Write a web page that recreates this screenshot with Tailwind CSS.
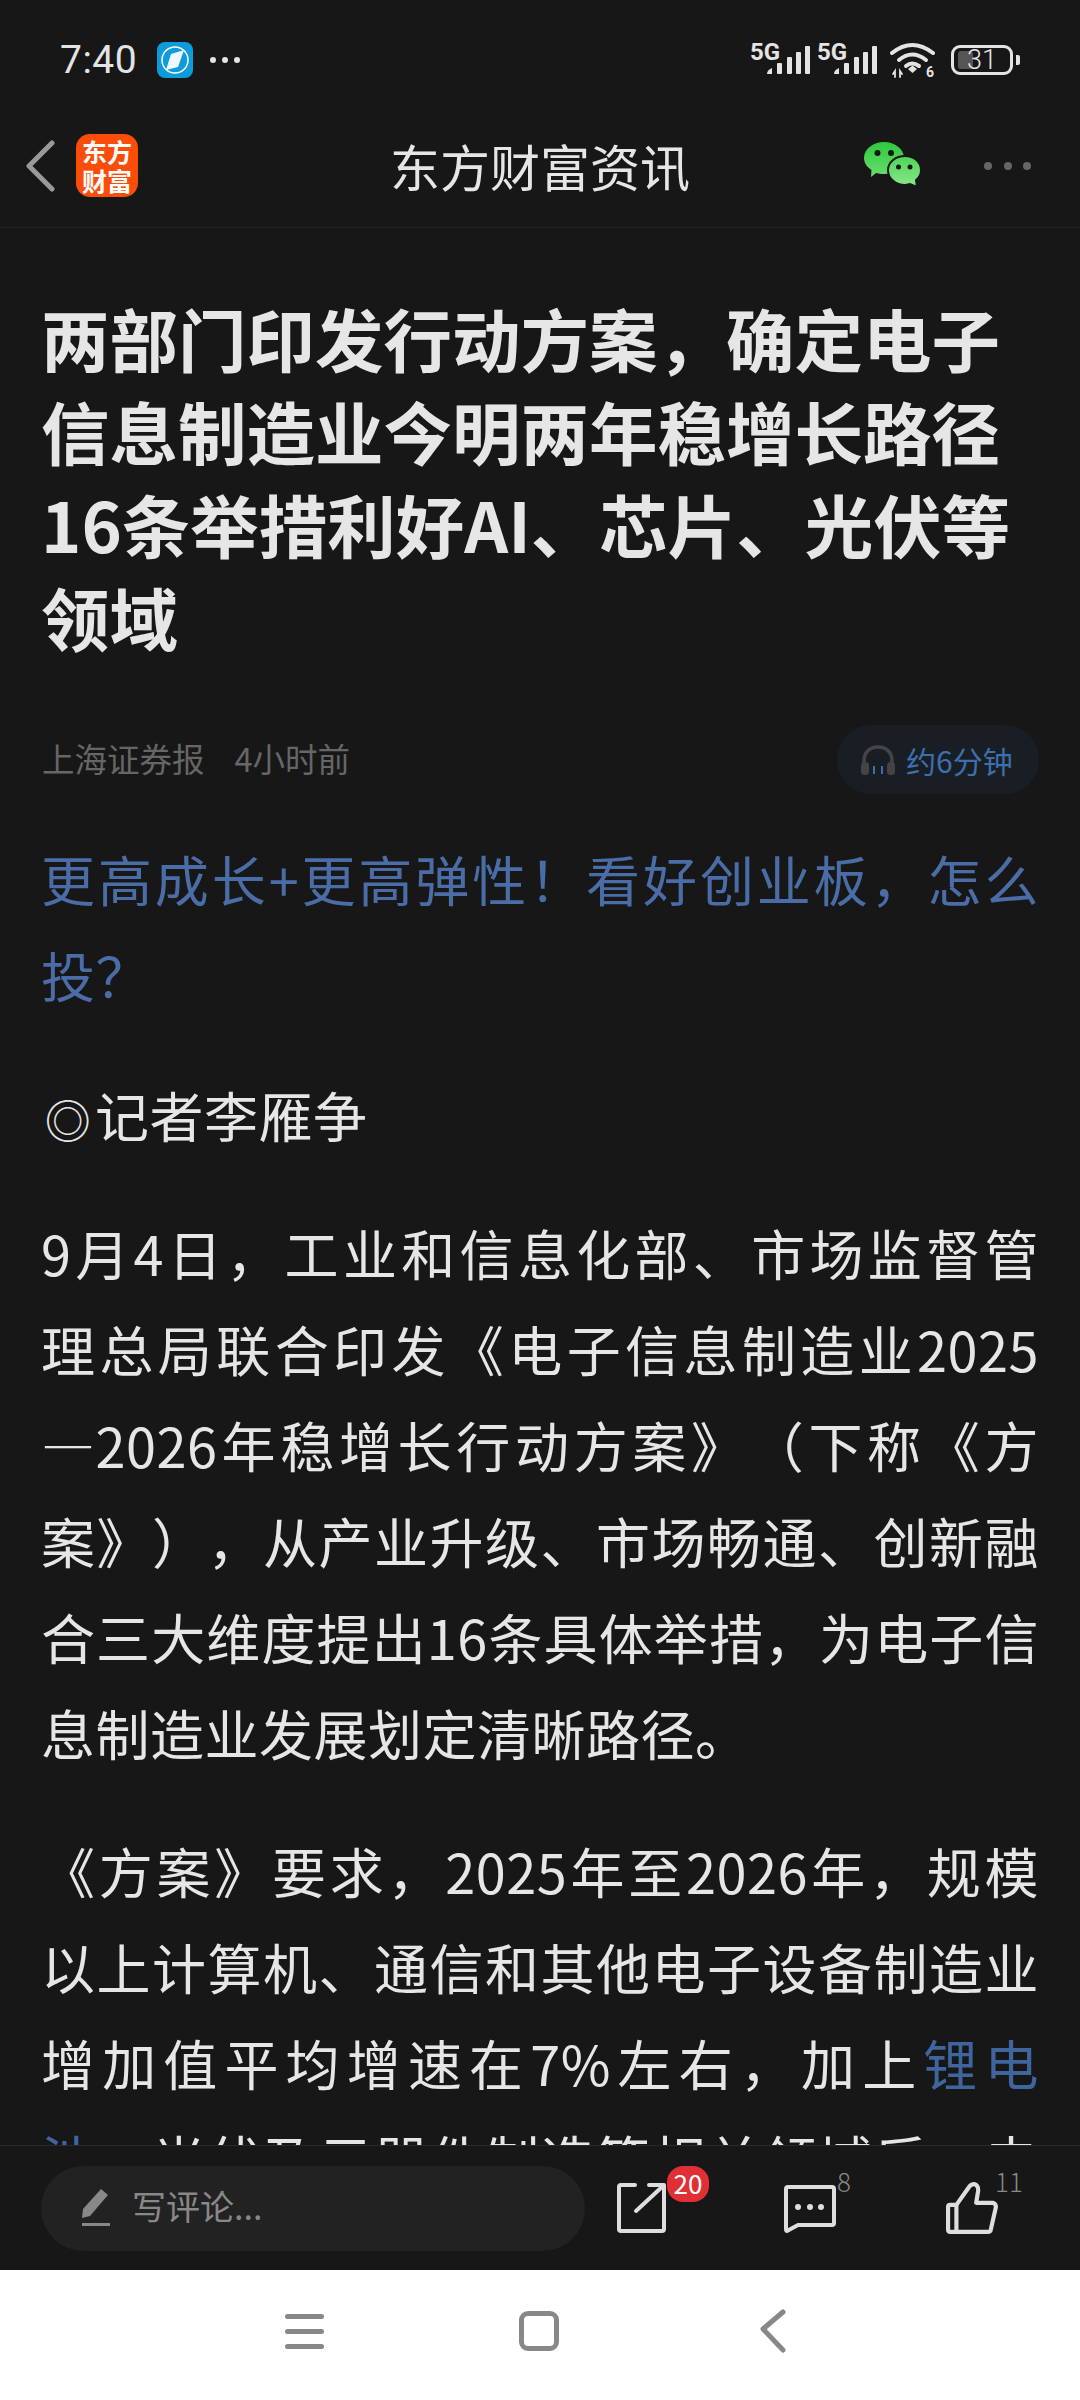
<!DOCTYPE html>
<html lang="zh-CN">
<head>
  <meta charset="UTF-8">
  <meta name="viewport" content="width=device-width, initial-scale=1.0">
  <title>东方财富资讯</title>
  <script src="https://cdn.jsdelivr.net/npm/@tailwindcss/browser@4"></script>
</head>
<body class="bg-[#171717]">
<div class="w-[1080px] h-[2400px] flex flex-col overflow-hidden bg-[#171717] text-[#e6e6e6] font-['Noto_Sans_CJK_SC',sans-serif]">

  <!-- status bar -->
  <div class="h-[80px] shrink-0 relative flex items-center pl-[60px] pr-[60px] pt-[40px]">
    <span class="font-['Roboto',sans-serif] text-[39px] leading-none tracking-[0.5px] text-[#e4e4e4]">7:40</span>
    <svg class="ml-[20px]" width="36" height="36" viewBox="0 0 36 36">
      <rect width="36" height="36" rx="8" fill="#0d9bdc"/>
      <circle cx="18" cy="18" r="13" fill="none" stroke="#fff" stroke-width="1.5"/>
      <path d="M27 8 L21 25 L9 28 L14 12 Z" fill="#eef8fd"/>
    </svg>
    <svg class="ml-[17px]" width="30" height="8" viewBox="0 0 30 8" fill="#e4e4e4">
      <circle cx="3" cy="4" r="3"/><circle cx="15" cy="4" r="3"/><circle cx="27" cy="4" r="3"/>
    </svg>
    <div class="ml-auto flex items-center">
      <div class="relative w-[60px] h-[36px]">
        <span class="absolute left-0 -top-[4px] text-[24px] leading-[28px] font-bold font-['Roboto',sans-serif] text-[#e4e4e4]">5G</span>
        <svg class="absolute left-[16px] top-[4px]" width="44" height="30" viewBox="0 0 44 30" fill="#e4e4e4">
          <path d="M1 28 Q1 24 6 22 V28 Z"/><rect x="11" y="17" width="5" height="11" rx="1"/><rect x="21" y="11" width="5" height="17" rx="1"/><rect x="30" y="6" width="5" height="22" rx="1"/><rect x="39" y="0" width="5" height="28" rx="1"/>
        </svg>
      </div>
      <div class="relative w-[60px] h-[36px] ml-[7px]">
        <span class="absolute left-0 -top-[4px] text-[24px] leading-[28px] font-bold font-['Roboto',sans-serif] text-[#e4e4e4]">5G</span>
        <svg class="absolute left-[16px] top-[4px]" width="44" height="30" viewBox="0 0 44 30" fill="#e4e4e4">
          <path d="M1 28 Q1 24 6 22 V28 Z"/><rect x="11" y="17" width="5" height="11" rx="1"/><rect x="21" y="11" width="5" height="17" rx="1"/><rect x="30" y="6" width="5" height="22" rx="1"/><rect x="39" y="0" width="5" height="28" rx="1"/>
        </svg>
      </div>
      <svg class="ml-[13px]" width="46" height="36" viewBox="0 0 46 36" fill="none" stroke="#e4e4e4" stroke-linecap="round">
        <path d="M2 11 Q22 -5 43 11" stroke-width="4"/>
        <path d="M9 18 Q22 7 36 18" stroke-width="4"/>
        <path d="M16 24 Q22 19 29 24" stroke-width="4"/>
        <path d="M18 27 L22.500 23.500 L27 27 L22.500 31 Z" fill="#e4e4e4" stroke="none"/>
        <path d="M3 32 L5 29 L5 35 M10 35 L10 29 L12 32" stroke-width="1.800"/>
        <text x="36" y="35" font-size="14" font-weight="700" fill="#e4e4e4" stroke="none" font-family="Roboto">6</text>
      </svg>
      <div class="ml-[15px] relative w-[62px] h-[30px] border-[3px] border-[#e4e4e4] rounded-[9px]">
        <div class="absolute left-[4px] top-[3px] w-[15px] h-[18px] bg-[#555] rounded-[3px]"></div>
        <span class="absolute inset-0 flex items-center justify-center text-[27px] leading-none font-['Roboto',sans-serif] font-light text-[#e4e4e4]">31</span>
      </div>
      <div class="ml-[3px] w-[4px] h-[10px] rounded-r-[2px] bg-[#e4e4e4]"></div>
    </div>
  </div>

  <!-- header -->
  <div class="h-[148px] shrink-0 relative flex items-center border-b border-[#262626] pl-[25px] pt-[24px]">
    <svg width="30" height="52" viewBox="0 0 30 52" fill="none">
      <path d="M27 3 L4 26 L27 49" stroke="#999" stroke-width="5" stroke-linecap="round" stroke-linejoin="round"/>
    </svg>
    <div class="ml-[21px] w-[62px] h-[63px] rounded-[14px] bg-[#fb4d0a] flex flex-col items-center justify-center text-white font-bold text-[25px] leading-[29px]">
      <span>东方</span>
      <span>财富</span>
    </div>
    <div class="absolute left-[390px] top-[49px] text-[50px] leading-[72px] text-[#e6e6e6]">东方财富资讯</div>
    <svg class="absolute left-[864px] top-[61px]" width="58" height="48" viewBox="0 0 58 48">
      <defs>
        <linearGradient id="wx1" x1="0" y1="0" x2="0" y2="1"><stop offset="0" stop-color="#2ec83c"/><stop offset="1" stop-color="#6ade70"/></linearGradient>
        <linearGradient id="wx2" x1="0" y1="0" x2="0" y2="1"><stop offset="0" stop-color="#4fd457"/><stop offset="1" stop-color="#8ae88c"/></linearGradient>
      </defs>
      <path d="M20 1 C31 1 40 8 40 17 C40 26 31 33 20 33 C17 33 14 32.500 12 32 L7 36 L7.500 29 C3 26 0 22 0 17 C0 8 9 1 20 1 Z" fill="url(#wx1)"/>
      <circle cx="13.500" cy="12" r="3" fill="#171717"/><circle cx="27" cy="12" r="3" fill="#171717"/>
      <path d="M41 15 C50 15 57 21 57 29 C57 33 55 37 52 39 L53 46 L46 43 C44 43.500 42.500 44 41 44 C32 44 24 38 24 29 C24 21 32 15 41 15 Z" fill="url(#wx2)" stroke="#171717" stroke-width="2"/>
      <circle cx="34.500" cy="26" r="2.500" fill="#171717"/><circle cx="46" cy="26" r="2.500" fill="#171717"/>
    </svg>
    <div class="absolute left-[984px] top-[82px] flex gap-[11.5px]">
      <span class="w-[8px] h-[8px] rounded-full bg-[#666]"></span>
      <span class="w-[8px] h-[8px] rounded-full bg-[#666]"></span>
      <span class="w-[8px] h-[8px] rounded-full bg-[#666]"></span>
    </div>
  </div>

  <!-- article -->
  <div class="flex-1 min-h-0 overflow-hidden px-[41px]">
    <h1 class="pt-[63px] text-[68.5px] leading-[93px] font-bold text-[#e6e6e6] w-[1000px]">两部门印发行动方案，确定电子信息制造业今明两年稳增长路径<br>16条举措利好AI、芯片、光伏等领域</h1>

    <div class="mt-[62px] h-[69px] flex items-center justify-between">
      <div class="-mt-[4px] ml-[1px] text-[32.5px] leading-[40px] text-[#666]">上海证券报<span class="ml-[30px]">4小时前</span></div>
      <div class="w-[202px] h-[69px] rounded-[34px] bg-[#191e24] flex items-center pl-[23px]">
        <svg width="36" height="32" viewBox="0 0 36 32" fill="none">
          <path d="M4 24 V17 C4 8 10 3 18 3 C26 3 32 8 32 17 V24" stroke="#444" stroke-width="3.500"/>
          <rect x="1" y="18" width="8" height="13" rx="3.500" fill="#444"/>
          <rect x="27" y="18" width="8" height="13" rx="3.500" fill="#444"/>
          <path d="M14 22 V30 M22 22 V30" stroke="#3d6fae" stroke-width="2"/>
        </svg>
        <span class="ml-[10px] text-[30px] leading-none text-[#3d6fae]">约6分钟</span>
      </div>
    </div>

    <div class="text-[54px] leading-[96px] text-justify tracking-[0.5px] [text-spacing-trim:space-all]">
      <p class="mt-[37px] text-[#4a6da7]">更高成长+更高弹性！看好创业板，怎么投？</p>
      <p class="mt-[44px]"><span class="inline-block w-[54px] text-[46px] text-center">◎</span>记者李雁争</p>
      <div class="mt-[39px]">
        <p class="[text-align-last:justify]">9月4日，工业和信息化部、市场监督管</p>
        <p class="[text-align-last:justify]">理总局联合印发《电子信息制造业2025</p>
        <p class="[text-align-last:justify]">—2026年稳增长行动方案》（下称《方</p>
        <p class="[text-align-last:justify]">案》），从产业升级、市场畅通、创新融</p>
        <p class="[text-align-last:justify]">合三大维度提出16条具体举措，为电子信</p>
        <p>息制造业发展划定清晰路径。</p>
      </div>
      <p class="mt-[42px]">《方案》要求，2025年至2026年，规模以上计算机、通信和其他电子设备制造业增加值平均增速在7%左右，加上<span class="text-[#3f659f]">锂电池</span>、光伏及元器件制造等相关领域后，电子信息制造业</p>
    </div>
  </div>

  <!-- bottom bar -->
  <div class="h-[125px] shrink-0 border-t border-[#2a2a2a] bg-[#171717] flex items-center pl-[41px]">
    <div class="w-[544px] h-[85px] rounded-[43px] bg-[#222] flex items-center pl-[40px]">
      <svg width="30" height="40" viewBox="0 0 30 40" fill="#888">
        <path d="M1 30 L2 21 L20 1 L27 7 L9 28 Z"/>
        <rect x="1" y="35" width="28" height="3"/>
      </svg>
      <span class="ml-[21px] -mt-[4px] text-[34px] leading-none text-[#888]">写评论...</span>
    </div>
    <div class="relative ml-[32px] w-[50px] h-[52px]">
      <svg width="50" height="52" viewBox="0 0 50 52" fill="none" stroke="#dedede" stroke-width="4" stroke-linecap="round" stroke-linejoin="round">
        <path d="M18 3 H4 Q2 3 2 5 V47 Q2 49 4 49 H45 Q47 49 47 47 V18"/>
        <path d="M19 29 L46 4 M32 3 H47 V17"/>
      </svg>
      <span class="absolute left-[50px] -top-[16px] w-[42px] h-[36px] rounded-[16px] bg-[#e03035] text-white text-[26px] leading-[34px] text-center">20</span>
    </div>
    <div class="relative ml-[117px] w-[52px] h-[50px]">
      <svg width="52" height="50" viewBox="0 0 52 50" fill="none" stroke="#dedede" stroke-width="4" stroke-linejoin="round">
        <path d="M2 6 Q2 4 4 4 H48 Q50 4 50 6 V40 Q50 42 48 42 H14 L3 48 Q2 48 2 46 Z"/>
        <circle cx="14" cy="24" r="3" fill="#dedede" stroke="none"/><circle cx="26" cy="24" r="3" fill="#dedede" stroke="none"/><circle cx="37" cy="24" r="3" fill="#dedede" stroke="none"/>
      </svg>
      <span class="absolute left-[53px] -top-[17px] text-[26px] leading-[30px] text-[#888] font-light">8</span>
    </div>
    <div class="relative ml-[110px] w-[52px] h-[52px]">
      <svg width="52" height="52" viewBox="0 0 50 50" fill="none" stroke="#dedede" stroke-width="4" stroke-linejoin="round">
        <path d="M2 24 Q2 22 4 22 H10 L22 5 Q24 2 27 2 Q31 3 31 8 L29 20 H45 Q48 21 48 24 L43 46 Q43 48 40 48 H4 Q2 48 2 46 Z"/>
        <path d="M10 22 V48"/>
      </svg>
      <span class="absolute left-[49px] -top-[16px] text-[26px] leading-[30px] text-[#888] font-light">11</span>
    </div>
  </div>

  <!-- nav bar -->
  <div class="h-[130px] shrink-0 bg-white flex items-center pb-[8px]">
    <div class="ml-[285px] w-[39px] flex flex-col gap-[10px]">
      <span class="h-[5px] rounded-full bg-[#888]"></span>
      <span class="h-[5px] rounded-full bg-[#888]"></span>
      <span class="h-[5px] rounded-full bg-[#888]"></span>
    </div>
    <div class="ml-[195px] w-[40px] h-[40px] rounded-[9px] border-[5px] border-[#888]"></div>
    <svg class="ml-[200px]" width="28" height="44" viewBox="0 0 28 44" fill="none">
      <path d="M24 3 L4 20 L24 41" stroke="#888" stroke-width="5" stroke-linecap="round" stroke-linejoin="round"/>
    </svg>
  </div>
</div>
</body>
</html>
